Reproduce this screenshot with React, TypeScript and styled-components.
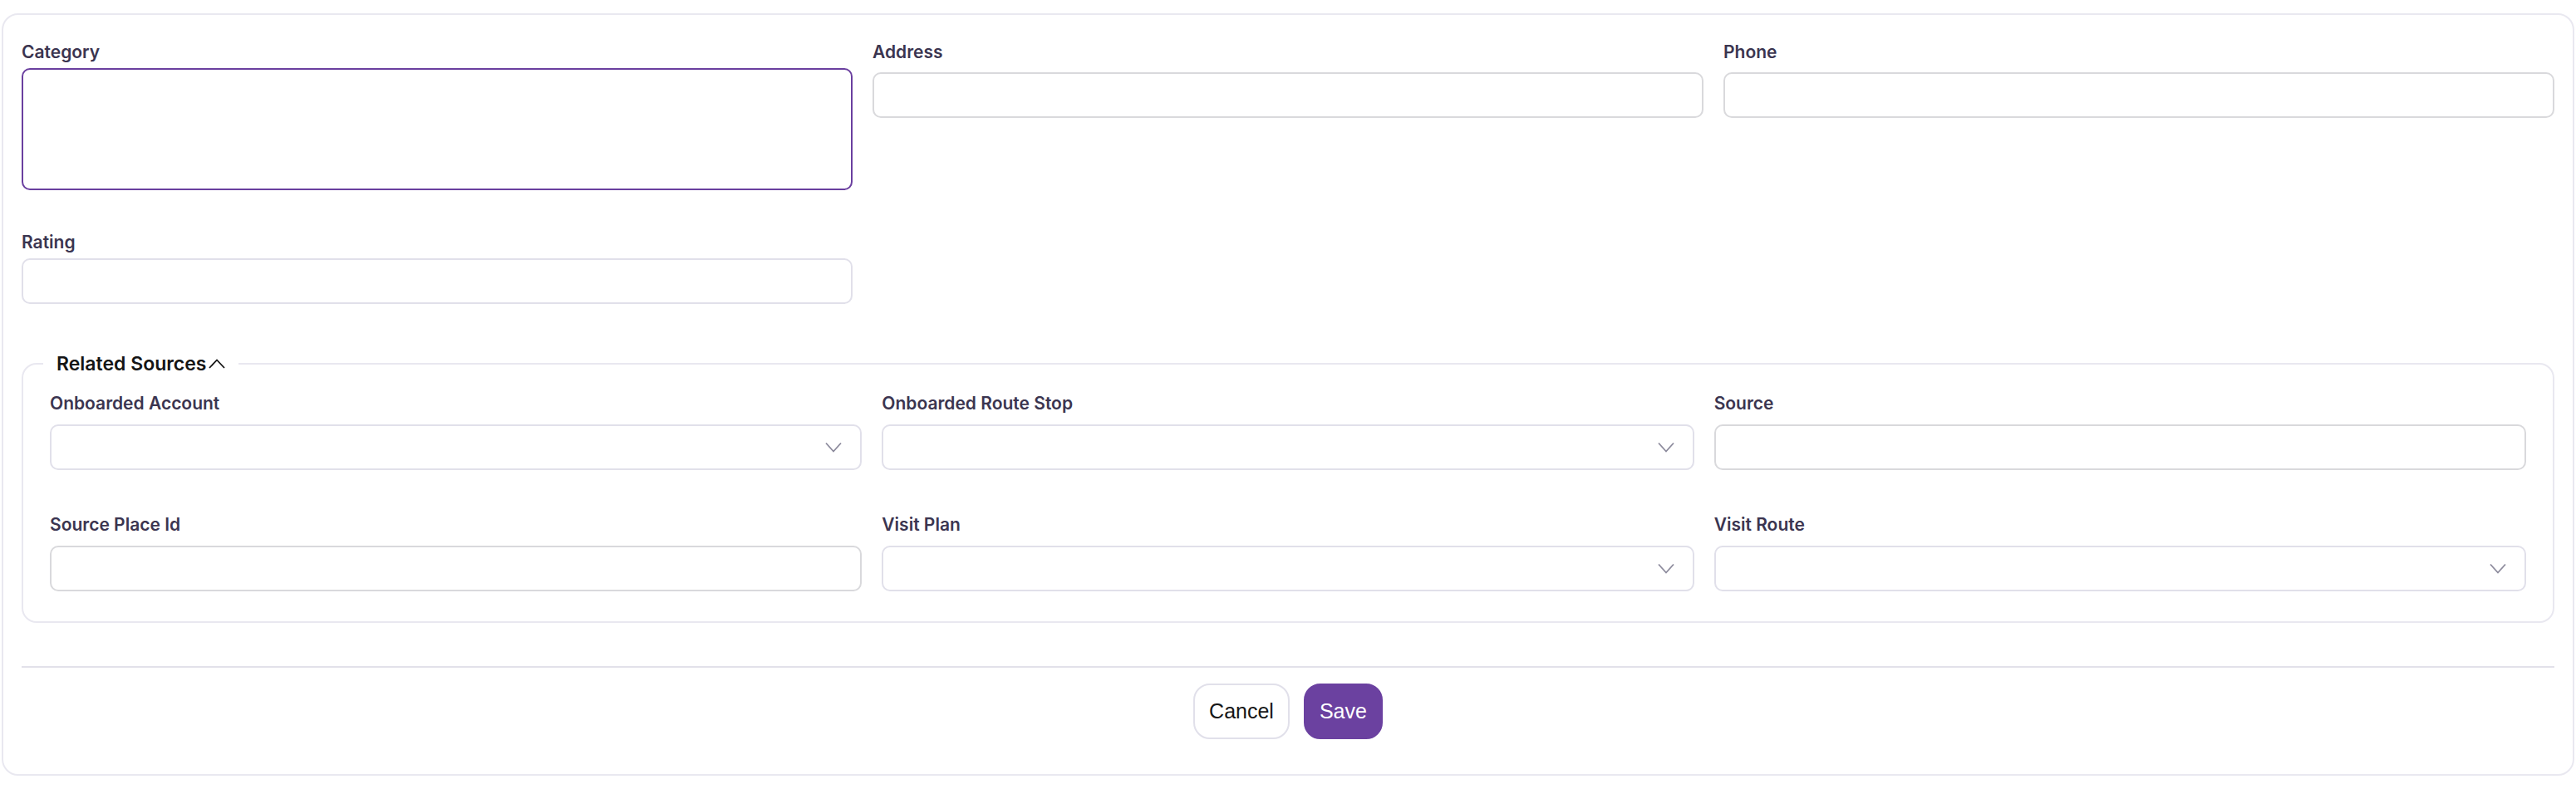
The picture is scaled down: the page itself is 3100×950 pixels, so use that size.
import React from 'react';
import styled, { createGlobalStyle } from 'styled-components';

const GlobalStyle = createGlobalStyle`
  * {
    box-sizing: border-box;
  }
  body {
    margin: 0;
    background: #fff;
    font-family: Inter, "Noto Sans", sans-serif;
  }
`;

const Page = styled.div`
  padding: 16px 2px 0;
`;

const Card = styled.form`
  border: 2px solid #e9e8f0;
  border-radius: 20px;
  padding: 30px 22px 42px;
  background: #fff;
`;

const Grid = styled.div<{ $rowGap: number }>`
  display: grid;
  grid-template-columns: repeat(3, 1fr);
  column-gap: 24px;
  row-gap: ${(p) => p.$rowGap}px;
  align-items: start;
`;

const Field = styled.div<{ $gap: number }>`
  display: flex;
  flex-direction: column;
  gap: ${(p) => p.$gap}px;
  min-width: 0;
`;

const Label = styled.label`
  font-size: 21px;
  line-height: 29px;
  font-weight: 600;
  color: #3b3550;
`;

const TextInput = styled.input<{ $soft?: boolean }>`
  height: 55px;
  width: 100%;
  border: 2px solid ${(p) => (p.$soft ? '#e1e0ea' : '#d9d9dc')};
  border-radius: 10px;
  background: #fff;
  font: inherit;
  font-size: 21px;
  padding: 0 18px;
  outline: none;
`;

const TextArea = styled.textarea`
  height: 147px;
  width: 100%;
  border: 2px solid #6a3f9f;
  border-radius: 10px;
  background: #fff;
  font: inherit;
  font-size: 21px;
  padding: 14px 18px;
  resize: none;
  outline: none;
`;

const SelectBox = styled.button`
  height: 55px;
  width: 100%;
  display: flex;
  align-items: center;
  justify-content: flex-end;
  padding: 0 22px 0 18px;
  border: 2px solid #e1e0ea;
  border-radius: 10px;
  background: #fff;
  cursor: pointer;
`;

const Section = styled.fieldset`
  margin: 56px 0 0;
  border: 2px solid #e9e8f0;
  border-radius: 18px;
  padding: 17px 32px 36px;
  min-width: 0;
`;

const Legend = styled.legend`
  margin-left: -8px;
  padding: 0 16px;
  display: flex;
  align-items: center;
  font-size: 23px;
  line-height: 32px;
  font-weight: 600;
  color: #151515;
`;

const Divider = styled.hr`
  margin: 52px 0 0;
  border: none;
  height: 2px;
  background: #e2e1ea;
`;

const Actions = styled.div`
  display: flex;
  justify-content: center;
  gap: 17px;
  margin-top: 19px;
`;

const Button = styled.button<{ $primary?: boolean }>`
  height: 67px;
  padding: 0 17px;
  border-radius: 20px;
  border: 2px solid ${(p) => (p.$primary ? '#6b41a0' : '#e1e0ea')};
  background: ${(p) => (p.$primary ? '#6b41a0' : '#fff')};
  color: ${(p) => (p.$primary ? '#fff' : '#161616')};
  font-family: "Liberation Sans", Arial, sans-serif;
  font-size: 25px;
  cursor: pointer;
`;

const ChevronDown = () => (
  <svg width="20" height="13" viewBox="0 0 20 13" fill="none">
    <path d="M1 1.5 L10 11.5 L19 1.5" stroke="#8c8a9c" strokeWidth="1.8" />
  </svg>
);

const ChevronUp = () => (
  <svg width="20" height="12" viewBox="0 0 20 12" fill="none" style={{ marginLeft: 2 }}>
    <path d="M1 11 L10 1.5 L19 11" stroke="#151515" strokeWidth="1.8" />
  </svg>
);

const Select: React.FC<{ label: string }> = ({ label }) => (
  <Field $gap={11}>
    <Label>{label}</Label>
    <SelectBox type="button" aria-label={label}>
      <ChevronDown />
    </SelectBox>
  </Field>
);

const App: React.FC = () => {
  return (
    <Page>
      <GlobalStyle />
      <Card onSubmit={(e) => e.preventDefault()}>
        <Grid $rowGap={48}>
          <Field $gap={5}>
            <Label>Category</Label>
            <TextArea />
          </Field>
          <Field $gap={10}>
            <Label>Address</Label>
            <TextInput />
          </Field>
          <Field $gap={10}>
            <Label>Phone</Label>
            <TextInput />
          </Field>
          <Field $gap={5}>
            <Label>Rating</Label>
            <TextInput $soft />
          </Field>
        </Grid>

        <Section>
          <Legend>
            Related Sources
            <ChevronUp />
          </Legend>
          <Grid $rowGap={51}>
            <Select label="Onboarded Account" />
            <Select label="Onboarded Route Stop" />
            <Field $gap={11}>
              <Label>Source</Label>
              <TextInput />
            </Field>
            <Field $gap={11}>
              <Label>Source Place Id</Label>
              <TextInput />
            </Field>
            <Select label="Visit Plan" />
            <Select label="Visit Route" />
          </Grid>
        </Section>

        <Divider />
        <Actions>
          <Button type="button">Cancel</Button>
          <Button type="submit" $primary>
            Save
          </Button>
        </Actions>
      </Card>
    </Page>
  );
};

export default App;
